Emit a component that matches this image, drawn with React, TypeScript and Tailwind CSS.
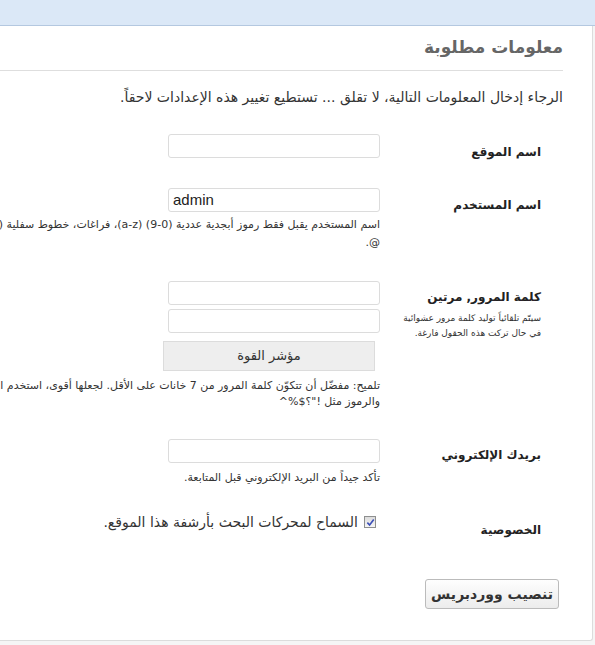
import React from 'react';

const arabic = { fontFamily: '"DejaVu Sans", "Noto Sans", sans-serif' };

const TextInput = ({ value = '', ltr = false }: { value?: string; ltr?: boolean }) => (
    <div
        dir={ltr ? 'ltr' : 'rtl'}
        className="flex h-[24px] w-[212px] items-center rounded-[3px] border border-[#dcdcdc] bg-white px-[4px] text-[15px] text-[#222] [font-family:'Liberation_Sans',Arial,sans-serif]"
    >
        {value}
    </div>
);

const Row = ({
    label,
    labelTop,
    fieldTop,
    note,
    children,
}: {
    label: string;
    labelTop: string;
    fieldTop: string;
    note?: React.ReactNode;
    children: React.ReactNode;
}) => (
    <div className="flex items-start">
        <div className={`w-[183px] shrink-0 pr-[22px] ${labelTop}`}>
            <div className="text-[12px] leading-[18px] font-bold whitespace-nowrap text-[#222]">{label}</div>
            {note}
        </div>
        <div className={`flex flex-col items-start ${fieldTop}`}>{children}</div>
    </div>
);

export default function App() {
    return (
        <div className="h-[645px] w-[595px] overflow-hidden bg-[#f5f5f5]" style={arabic}>
            {/* top band */}
            <div className="h-[26px] border-b border-[#b4c8e0] bg-[#dbe8f7]" />

            <div dir="rtl" className="w-[593px] rounded-br-[3px] border-r border-b border-[#dcdcdc] bg-white pr-[29px] pb-[31px]">
                {/* heading */}
                <div className="h-[45px] border-b border-[#dedede] pt-[7px]">
                    <h1 className="text-[17px] leading-[28px] font-bold whitespace-nowrap text-[#666]">معلومات مطلوبة</h1>
                </div>

                <p className="mt-[17px] text-[14px] leading-[18px] whitespace-nowrap text-[#333]">
                    الرجاء إدخال المعلومات التالية، لا تقلق ... تستطيع تغيير هذه الإعدادات لاحقاً.
                </p>

                <Row label="اسم الموقع" labelTop="pt-[37px]" fieldTop="pt-[28px] pb-[20px]">
                    <TextInput />
                </Row>

                <Row label="اسم المستخدم" labelTop="pt-[18px]" fieldTop="pt-[10px]">
                    <TextInput value="admin" ltr />
                    <p className="mt-[4px] text-[11px] leading-[18px] whitespace-nowrap text-[#333]">
                        اسم المستخدم يقبل فقط رموز أبجدية عددية (0-9) (a-z)، فراغات، خطوط سفلية (_)، شرطات (-)، نقاط والرمز
                        <br />
                        @.
                    </p>
                </Row>

                <Row
                    label="كلمة المرور, مرتين"
                    labelTop="pt-[36px]"
                    fieldTop="pt-[29px]"
                    note={
                        <p className="mt-[5px] text-[9px] leading-[15px] whitespace-nowrap text-[#333]">
                            سيتّم تلقائياً توليد كلمة مرور عشوائية
                            <br />
                            في حال تركت هذه الحقول فارغة.
                        </p>
                    }
                >
                    <TextInput />
                    <div className="mt-[4px]">
                        <TextInput />
                    </div>
                    <div className="mt-[8px] mr-[5px] flex h-[30px] w-[212px] items-center justify-center border border-[#dcdcdc] bg-[#eeeeee] text-[13px] text-[#333]">
                        مؤشر القوة
                    </div>
                    <p className="mt-[7px] text-[11px] leading-[16px] whitespace-nowrap text-[#333]">
                        تلميح: مفضّل أن تتكوّن كلمة المرور من 7 خانات على الأقل. لجعلها أقوى، استخدم الحروف الكبيرة والصغيرة والأرقام
                        <br />
                        والرموز مثل !"؟$%^
                    </p>
                </Row>

                <Row label="بريدك الإلكتروني" labelTop="pt-[36px]" fieldTop="pt-[29px]">
                    <TextInput />
                    <p className="mt-[7px] text-[11px] leading-[16px] whitespace-nowrap text-[#333]">
                        تأكد جيداً من البريد الإلكتروني قبل المتابعة.
                    </p>
                </Row>

                <Row label="الخصوصية" labelTop="pt-[35px]" fieldTop="pt-[27px]">
                    <div className="flex items-center gap-[6px] text-[14px] leading-[18px] whitespace-nowrap text-[#333]">
                        <span className="mr-[4px] flex h-[12px] w-[12px] items-center justify-center border border-[#8e8f8f] bg-gradient-to-b from-[#dcdcdc] to-[#f6f6f6]">
                            <svg viewBox="0 0 10 10" className="h-[9px] w-[9px]">
                                <path d="M1.5 5.2 L4 7.8 L8.6 1.6" fill="none" stroke="#3d50b8" strokeWidth="1.8" />
                            </svg>
                        </span>
                        السماح لمحركات البحث بأرشفة هذا الموقع.
                    </div>
                </Row>

                <div className="mt-[40px] mr-[4px]">
                    <button className="h-[30px] w-[134px] rounded-[3px] border border-[#bbbbbb] bg-gradient-to-b from-[#fefefe] to-[#ececec] text-[14px] font-bold text-[#333]">
                        تنصيب ووردبريس
                    </button>
                </div>
            </div>
        </div>
    );
}
